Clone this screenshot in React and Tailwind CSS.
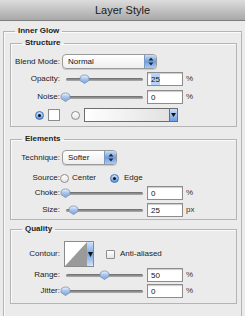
import React from 'react';

function Group({ legend, className = '', children }) {
  return (
    <fieldset className={`border border-[#b4b4b4] shadow-[inset_1px_1px_0_#fafafa] ${className}`}>
      <legend className="ml-[11px] px-[3px] text-[8px] font-bold leading-[12px] text-[#222]">{legend}</legend>
      {children}
    </fieldset>
  );
}

function Label({ children }) {
  return <span className="w-[49px] shrink-0 text-right text-[8px] leading-[12px] text-[#222]">{children}</span>;
}

function Stepper() {
  return (
    <div className="flex w-[12px] h-full items-center justify-center rounded-r-[3px] border-l border-[#7a98c4] bg-gradient-to-b from-[#c9defa] via-[#6f9de0] to-[#a8cbf5]">
      <svg width="6" height="9" viewBox="0 0 6 9">
        <path d="M3 0.5 L5.5 3.5 L0.5 3.5 Z" fill="#1e2a3a" />
        <path d="M3 8.5 L5.5 5.5 L0.5 5.5 Z" fill="#1e2a3a" />
      </svg>
    </div>
  );
}

function Select({ value, width }) {
  return (
    <div className={`ml-[2px] flex h-[15px] ${width} items-center overflow-hidden rounded-[4px] border border-[#9a9a9a] bg-gradient-to-b from-white to-[#efefef] shadow-[0_1px_1px_rgba(0,0,0,0.15)]`}>
      <span className="flex-1 pl-[5px] text-[8px] leading-[12px] text-[#111]">{value}</span>
      <Stepper />
    </div>
  );
}

function Thumb() {
  return (
    <svg width="11" height="10" viewBox="0 0 11 10">
      <defs>
        <linearGradient id="tg" x1="0" y1="0" x2="0" y2="1">
          <stop offset="0" stopColor="#edf4ff" />
          <stop offset="0.5" stopColor="#a3c2ec" />
          <stop offset="1" stopColor="#7aa5df" />
        </linearGradient>
      </defs>
      <path d="M1 5 Q1 1 5.5 1 Q10 1 10 5 L10 6.5 L5.5 9.5 L1 6.5 Z" fill="url(#tg)" stroke="#7d8ea8" strokeWidth="0.8" />
    </svg>
  );
}

function Slider({ value, max }) {
  const left = (value / max) * 77 - 6;
  return (
    <div className="relative ml-[6px] h-[14px] w-[77px]">
      <div className="absolute left-0 right-0 top-[6px] h-[3px] rounded-full bg-gradient-to-b from-[#6a6a6a] to-[#b0b0b0]" />
      <div className="absolute top-[2px]" style={{ left }}>
        <Thumb />
      </div>
    </div>
  );
}

function NumField({ value, selected }) {
  return (
    <div className="ml-[4px] flex h-[14px] w-[36px] items-center border border-[#8c8c8c] bg-white pl-[3px] shadow-[inset_0_1px_1px_rgba(0,0,0,0.2)]">
      <span className={`text-[8px] leading-[11px] text-[#111] ${selected ? 'bg-[#b5d3fb]' : ''}`}>{value}</span>
    </div>
  );
}

function SliderRow({ label, value, max, unit, selected, className = '' }) {
  return (
    <div className={`flex h-[14px] items-center ${className}`}>
      <Label>{label}</Label>
      <Slider value={value} max={max} />
      <NumField value={value} selected={selected} />
      <span className="ml-[3px] text-[8px] leading-[12px] text-[#333]">{unit}</span>
    </div>
  );
}

function Radio({ checked }) {
  return (
    <div
      className={`flex h-[9px] w-[9px] shrink-0 items-center justify-center rounded-full border ${
        checked ? 'border-[#3f6fb5] bg-gradient-to-b from-[#cfe2fb] to-[#5d95dc]' : 'border-[#8d8d8d] bg-gradient-to-b from-white to-[#e4e4e4]'
      }`}
    >
      {checked && <div className="h-[3px] w-[3px] rounded-full bg-[#111]" />}
    </div>
  );
}

export default function App() {
  return (
    <div className="h-[316px] w-[245px] overflow-hidden bg-[#ebebeb] font-['Liberation_Sans',Arial,sans-serif] text-[#222]">
      <div className="flex h-[21px] items-center justify-center border-b border-[#7c7c7c] bg-gradient-to-b from-[#dcdcdc] to-[#a9a9a9] text-[11px] text-[#1a1a1a]">
        Layer Style
      </div>

      <Group legend="Inner Glow" className="mx-[3px] mt-[4px] pb-[40px]">
        <Group legend="Structure" className="ml-[6px] mr-[4px] pb-[4px]">
          <div className="mt-[5px] flex items-center">
            <Label>Blend Mode:</Label>
            <Select value="Normal" width="w-[95px]" />
          </div>
          <SliderRow label="Opacity:" value={25} max={100} unit="%" selected className="mt-[3px]" />
          <SliderRow label="Noise:" value={0} max={100} unit="%" className="mt-[4px]" />
          <div className="mt-[4px] flex h-[14px] items-center">
            <div className="ml-[24px]">
              <Radio checked />
            </div>
            <div className="ml-[4px] h-[12px] w-[12px] border border-[#8c8c8c] bg-white" />
            <div className="ml-[11px]">
              <Radio />
            </div>
            <div className="ml-[4px] flex h-[14px] items-stretch border border-[#6d6d6d]">
              <div className="w-[84px] bg-gradient-to-r from-white to-[#e2e2e2]" />
              <div className="flex w-[8px] items-center justify-center border-l border-[#6d6d6d] bg-gradient-to-b from-[#c9defa] to-[#6f9de0]">
                <svg width="5" height="4" viewBox="0 0 5 4">
                  <path d="M0 0 L5 0 L2.5 4 Z" fill="#111" />
                </svg>
              </div>
            </div>
          </div>
        </Group>

        <Group legend="Elements" className="ml-[6px] mr-[4px] mt-[6px] pb-[2px]">
          <div className="mt-[5px] flex items-center">
            <Label>Technique:</Label>
            <Select value="Softer" width="w-[55px]" />
          </div>
          <div className="mt-[6px] flex h-[14px] items-center text-[8px] leading-[12px]">
            <Label>Source:</Label>
            <Radio />
            <span className="ml-[3px]">Center</span>
            <div className="ml-[14px]">
              <Radio checked />
            </div>
            <span className="ml-[5px]">Edge</span>
          </div>
          <SliderRow label="Choke:" value={0} max={100} unit="%" className="mt-[1px]" />
          <SliderRow label="Size:" value={25} max={250} unit="px" className="mt-[3px]" />
        </Group>

        <Group legend="Quality" className="ml-[6px] mr-[4px] mt-[3px] pb-[5px]">
          <div className="mt-[6px] flex items-center">
            <Label>Contour:</Label>
            <div className="ml-[4px] flex h-[26px] w-[30px] border border-[#8a8a8a] bg-white">
              <svg width="22" height="24" viewBox="0 0 22 24" className="shrink-0">
                <path d="M0 24 L22 0 L22 24 Z" fill="#9a9a9a" />
              </svg>
              <div className="flex flex-1 items-center justify-center rounded-r-[2px] bg-gradient-to-b from-[#cfe2fb] via-[#79a5e3] to-[#cfe2fb]">
                <svg width="5" height="5" viewBox="0 0 5 5">
                  <path d="M0 0 L5 0 L2.5 5 Z" fill="#111" />
                </svg>
              </div>
            </div>
            <div className="ml-[12px] h-[9px] w-[9px] rounded-[1px] border border-[#8d8d8d] bg-gradient-to-b from-white to-[#e6e6e6]" />
            <span className="ml-[5px] text-[8px] leading-[12px]">Anti-aliased</span>
          </div>
          <SliderRow label="Range:" value={50} max={100} unit="%" className="mt-[1px]" />
          <SliderRow label="Jitter:" value={0} max={100} unit="%" className="mt-[2px]" />
        </Group>
      </Group>
    </div>
  );
}
